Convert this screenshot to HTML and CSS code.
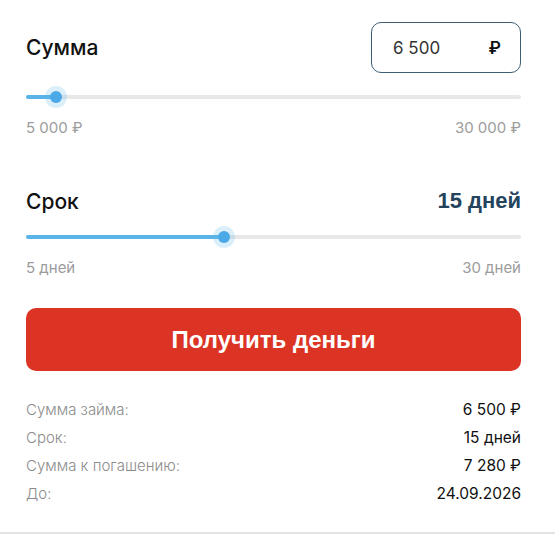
FILE: index.html
```html
<!DOCTYPE html>
<html lang="ru">
<head>
  <meta charset="UTF-8">
  <title>Калькулятор займа</title>
  <link rel="stylesheet" href="styles.css">
</head>
<body>

  <div class="calc">

    <div class="row-head first">
      <div class="title">Сумма</div>
      <div class="amount-box">
        <span class="amount-value">6 500</span>
        <span class="amount-cur">₽</span>
      </div>
    </div>

    <div class="slider">
      <div class="track"></div>
      <div class="fill" style="width: 6%;"></div>
      <div class="thumb" style="left: 6%;"></div>
    </div>

    <div class="limits">
      <span>5 000 ₽</span>
      <span>30 000 ₽</span>
    </div>

    <div class="row-head second">
      <div class="title">Срок</div>
      <div class="term-value">15 дней</div>
    </div>

    <div class="slider">
      <div class="track"></div>
      <div class="fill" style="width: 40%;"></div>
      <div class="thumb" style="left: 40%;"></div>
    </div>

    <div class="limits">
      <span>5 дней</span>
      <span>30 дней</span>
    </div>

    <button class="get-btn">Получить деньги</button>

    <div class="summary">
      <div class="sum-row"><span class="label">Сумма займа:</span><span class="val">6 500 ₽</span></div>
      <div class="sum-row"><span class="label">Срок:</span><span class="val">15 дней</span></div>
      <div class="sum-row"><span class="label">Сумма к погашению:</span><span class="val">7 280 ₽</span></div>
      <div class="sum-row"><span class="label">До:</span><span class="val">24.09.2026</span></div>
    </div>

  </div>

</body>
</html>
```

FILE: styles.css
```css
body {
  margin: 0;
  font-family: 'Inter', 'Liberation Sans', sans-serif;
  background-color: #fff;
  color: #111;
}

.calc {
  padding: 22px 34px 24px 26px;
  border-bottom: 2px solid #e2e4e4;
}

.row-head {
  display: flex;
  justify-content: space-between;
  align-items: center;
}

.row-head.second {
  margin-top: 48px;
  height: 30px;
}

.title {
  font-size: 21px;
  font-weight: 500;
  color: #111;
}

.amount-box {
  box-sizing: border-box;
  width: 150px;
  height: 51px;
  border: 1px solid #3f5e73;
  border-radius: 10px;
  display: flex;
  align-items: center;
  justify-content: space-between;
  padding: 0 19px 0 21px;
}

.amount-value {
  font-size: 17px;
  color: #333;
}

.amount-cur {
  font-size: 17px;
  font-weight: 600;
  color: #111;
}

.term-value {
  font-family: 'Liberation Sans', Arial, sans-serif;
  font-size: 22px;
  font-weight: 700;
  color: #24445e;
}

.slider {
  position: relative;
  height: 20px;
  margin-top: 14px;
}

.row-head.second + .slider {
  margin-top: 11px;
}

.track,
.fill {
  position: absolute;
  left: 0;
  top: 8px;
  height: 4px;
  border-radius: 2px;
}

.track {
  right: 0;
  background-color: #e8e8e8;
}

.fill {
  background-color: #5ab4e8;
}

.thumb {
  position: absolute;
  top: 4px;
  width: 12px;
  height: 12px;
  margin-left: -6px;
  border-radius: 50%;
  background-color: #4aa9e6;
  box-shadow: 0 0 0 5px rgba(90, 180, 232, 0.22);
}

.limits {
  display: flex;
  justify-content: space-between;
  margin-top: 11px;
  font-size: 15px;
  line-height: 20px;
  color: #9c9c9c;
}

.get-btn {
  display: block;
  width: 100%;
  height: 63px;
  margin-top: 30px;
  border: none;
  border-radius: 10px;
  background-color: #dc3424;
  color: #fff;
  font-family: 'Liberation Sans', Arial, sans-serif;
  font-size: 24px;
  font-weight: 700;
}

.summary {
  margin-top: 25px;
}

.sum-row {
  display: flex;
  justify-content: space-between;
  font-size: 15px;
  line-height: 28px;
}

.sum-row .label {
  color: #8c8c8c;
  font-weight: 300;
}

.sum-row .val {
  color: #111;
  font-size: 15.5px;
}
```
